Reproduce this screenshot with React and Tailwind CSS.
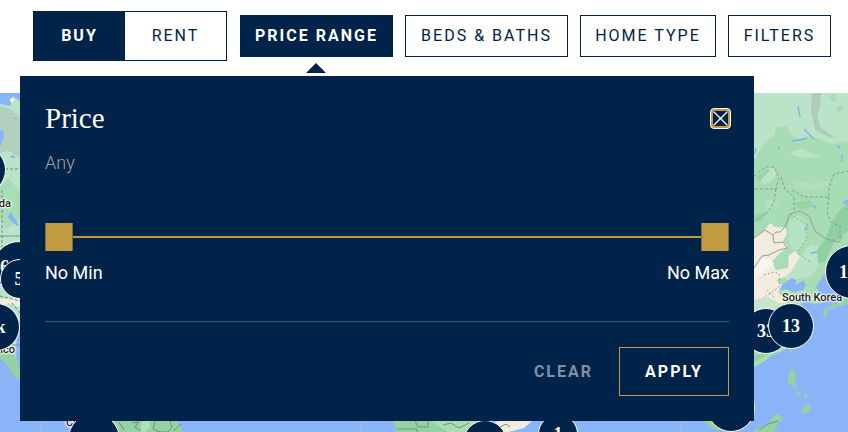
import { useState } from "react";

const sans = "font-['Roboto','Liberation_Sans',sans-serif]";
const serif = "font-['Liberation_Serif','Noto_Serif',serif]";

const filterClass =
  "h-[42px] shrink-0 border border-[#002349] text-base tracking-[2px] whitespace-nowrap";

const thumbClass =
  "col-start-1 row-start-1 h-7 w-full appearance-none bg-transparent pointer-events-none m-0 outline-none [&::-webkit-slider-thumb]:pointer-events-auto [&::-webkit-slider-thumb]:appearance-none [&::-webkit-slider-thumb]:h-7 [&::-webkit-slider-thumb]:w-7 [&::-webkit-slider-thumb]:bg-[#c29b40] [&::-webkit-slider-thumb]:border-x [&::-webkit-slider-thumb]:border-[#7d6c45]";

const pins = [
  { id: "canada", label: "", place: "left-[-42px] top-[53px] size-12" },
  { id: "west", label: "6", place: "left-[-7px] top-[148px] size-13 pr-[29px]" },
  { id: "usa", label: "5k", place: "left-0 top-[166px] size-10 pl-2" },
  { id: "mexico", label: "1k", place: "left-[-28px] top-[210px] size-12" },
  { id: "south", label: "", place: "left-[68px] top-[320px] size-13" },
  { id: "africa", label: "", place: "left-[463px] top-[327px] size-11" },
  { id: "indian", label: "1", place: "left-[538px] top-[321px] size-10" },
  { id: "asia", label: "", place: "left-[707px] top-[291px] size-12" },
  { id: "china", label: "33", place: "left-[743px] top-[215px] size-[46px]" },
  { id: "taiwan", label: "13", place: "left-[768px] top-[210px] size-[46px]" },
  { id: "japan", label: "13", place: "left-[825px] top-[152px] size-[54px] pr-2" },
];

function MapArt() {
  return (
    <svg
      className="absolute inset-0 size-full"
      viewBox="0 93 848 339"
      preserveAspectRatio="xMinYMin slice"
      aria-hidden="true"
    >
      <rect y="93" width="848" height="339" fill="#8ab4f8" />

      {/* North America */}
      <path d="M0 93H30V388L17 378L9 363L0 350Z" fill="#bbe3c8" />
      <path d="M0 93H20V101L13 96L10 106L0 104Z" fill="#8ab4f8" />
      <path d="M0 106L10 109L20 117V158L9 151L0 153Z" fill="#b1d1be" />
      <path d="M0 188L8 177L20 192V220L6 229L0 217Z" fill="#a8dcb5" />
      <path d="M0 131l3-2 1 8-4 10zM7 217l4-5 8 13-2 1zM10 156l3-1 3 3-4 0zM13 119l3-2v2z" fill="#8ab4f8" />
      <path d="M0 299L20 298V307L8 303L0 310Z" fill="#f3ebdd" />
      <path d="M0 349L10 348L20 363V381L12 374L5 362L0 359Z" fill="#94d2a5" />
      <path d="M20 318V370L15 352Z" fill="#8ab4f8" />
      <path d="M0 359L6 363L13 375L20 381V389L0 377Z" fill="#8ab4f8" />
      <path d="M0 236H20M0 345H20" stroke="#7e9788" />
      <path d="M5 169H20M2 190V250M0 296L20 301M12 303L20 313" fill="none" stroke="#71887a" strokeDasharray="3 2" />
      <circle cx="12" cy="100" r="2" fill="#fff" />
      <path d="M41.5 421V432M361.5 421V432M681.5 421V432" stroke="#9cc0fa" />

      {/* South America */}
      <path d="M112 421H178L183 432H116Z" fill="#94d2a5" />
      <path d="M142 421h8v6l-5 5h-5z" fill="#b3dfc0" />
      <path d="M119 422l5 8m8-7l7-1-4 5 6 4m14-10l-2 8 7 3h8l4-5-2-6m3 10l8-7" fill="none" stroke="#718f7c" />

      {/* Africa */}
      <path d="M393 421H485V432H397Z" fill="#94d2a5" />
      <path d="M430 421L448 432H474V421Z" fill="#abdcb7" />
      <path d="M497 421H532L524 428L509 432H490Z" fill="#f3ebdd" />
      <path d="M397 429H417V432M415 421l3 6h10V421M443 425l8-2 8 5 10-5M498 428l8-4 4 3" fill="none" stroke="#77907d" />

      {/* Asia */}
      <path d="M754 93H848V321L812 304L801 306L812 320L800 345L774 354L754 369Z" fill="#a8dcb5" />
      <path d="M754 93H848V141L832 144L820 139L806 136L800 140L790 134L786 126L776 128L774 136L764 143L754 160Z" fill="#bbe3c8" />
      <path d="M812 93H821L820 108L817 115L820 127L836 138L828 137L815 130L811 110Z" fill="#aecdb8" />
      <path d="M829 98l5-5 3 6-4 4zM836 109l6-6 2 6-5 3z" fill="#a8dcb5" />
      <path d="M790 152l12-3 12 6 6-1-2 3-10 1-14-2zM763 172l9-5 5 3-3 9-9 5-5-4z" fill="#bbe3c8" />
      <path d="M794 180l20 4 14-3v6l-18 3-16-3zM764 201l14-3 2 7-14 5z" fill="#b2dfc0" />
      <path d="M756 178l9-9 5 1-11 12zM792 203l18-3 4 6-12 4zM754 216l12-4-5 9-7 2z" fill="#98d4a9" />
      <path d="M754 237L764 231L770 223L775 227L786 228L787 234L783 241L788 247L779 254L772 262L776 270L788 268L789 255L795 251L800 257L796 268L787 276L776 280L784 287L778 292L784 300L790 306L775 308L754 300Z" fill="#f3ebdd" />
      <path d="M754 265L762 258L770 259L774 264L766 270L754 280Z" fill="#faf4ef" />
      <path d="M800 257L811 244L824 247L820 262L812 276L798 279L790 282L784 278L790 273Z" fill="#bbe3c8" />
      <path d="M789 221L799 215L808 225L806 240L799 250L793 250L788 240Z" fill="#b7e1c3" />
      <path d="M838 212L848 203V231L834 243L824 262L818 263L817 250L826 238L830 226Z" fill="#8fd0a1" />
      <path d="M754 300l13-3 12 6 12 0-4 18-20 6-13-4z" fill="#c6e5cb" />
      <path d="M779 290L783 284L792 278L796 280L796 285L804 280L806 285L803 290L793 292L787 289Z" fill="#8ab4f8" />
      <path d="M808 293L815 288L823 276L831 268L848 256V432H754V367L775 356L796 342L806 326L800 308L805 296L811 304Z" fill="#8ab4f8" />
      <path d="M808 290L815 286L818 290L822 303L812 304L808 298Z" fill="#a8dcb5" />
      <path d="M798 106l2 11M804 129l5 5 5 5M792 141l7-1 8-2M842 154v8M779 147v3M756 148l-1 5M805 231l2-7M811 253l6-1M837 146l3 2" fill="none" stroke="#7fb0f5" strokeWidth="1.3" />
      <path d="M842 203l6-4v6zM813 206l4-1-2 4z" fill="#8ab4f8" />
      <path d="M754 176L765 167L774 167L779 177L776 189H754M776 189L774 202L768 212L755 221M781 177L785 189L794 197L794 210M792 190L804 197H829L829 188L834 174L848 171M829 197L827 212L831 222L840 226L840 238" fill="none" stroke="#83a08c" strokeDasharray="3 2" />
      <path d="M754 238L765 230L773 235L776 232H780L785 227L790 214L800 211L809 216L815 231L826 239L839 242L842 236M773 235L774 243L783 242L787 248L779 250L769 255L762 256L754 268" fill="none" stroke="#8fa094" />
      <path d="M790 214L808 225L806 240L798 252L806 260L812 262M764 275l10-3 5 2 1 12-8 6-9 6M767 290l8 8" fill="none" stroke="#9ba79c" strokeDasharray="2 2" />

      {/* Pacific islands */}
      <path d="M823 310l7-3 5-3 6-5 7-2v7l-8 2-7 3-6 1v6l-3 4zM790 351l3-2-2 6zM790 370l5 1 1 9-2 4 4 3-1 2-6-5-4 0zM796 391l3 1 1 4-3-1zM803 393l5 1-2 5zM805 406l4-3 2 7-7 4-3-3zM783 405l4-8-5 10zM754 430l12-5 11-12 7 6-6 3-3 10h-21zM703 421h12l9 10-12-2zM754 356l11-3 12-5-9 7-14 7z" fill="#94d2a5" />
      <path d="M759 430l9-6 10-3" fill="none" stroke="#718f7c" />
    </svg>
  );
}

function MapView() {
  return (
    <main className="relative min-h-[339px] flex-1 overflow-hidden" aria-label="Map of listings">
      <MapArt />
      <div className="text-[11px] leading-4 font-medium text-[#222] [text-shadow:0_0_2px_#fff,0_0_2px_#fff,0_0_2px_#fff,0_0_3px_#fff,0_0_3px_#fff]">
        <span className="absolute right-[calc(100%-11px)] top-[103px]">Canada</span>
        <span className="absolute right-[calc(100%-15px)] top-[249px]">Mexico</span>
        <span className="absolute left-[66px] top-[322px]">Chile</span>
        <span className="absolute left-[782px] top-[197px] whitespace-nowrap">South Korea</span>
      </div>
      {pins.map((p) => (
        <button
          key={p.id}
          type="button"
          aria-label={p.label ? undefined : p.id}
          className={`absolute flex items-center justify-center rounded-full border border-white bg-[#002349] text-lg font-bold text-white ${serif} ${p.place}`}
        >
          {p.label}
        </button>
      ))}
    </main>
  );
}

function PricePanel() {
  const [min, setMin] = useState(0);
  const [max, setMax] = useState(100);
  return (
    <section
      aria-labelledby="price-title"
      className="absolute left-5 top-[76px] z-10 w-[calc(100%-40px)] max-w-[734px] bg-[#002349] px-[25px] pb-[25px] pt-6 text-white"
    >
      <svg className="absolute left-[286px] top-[-13px] h-2.5 w-5" viewBox="0 0 20 10" aria-hidden="true">
        <path d="M0 10L10 0L20 10Z" fill="#002349" />
      </svg>
      <div className="flex h-9 items-center justify-between">
        <h2 id="price-title" className={`text-[29px] leading-9 ${serif}`}>Price</h2>
        <button
          type="button"
          aria-label="Close"
          className="-mr-0.5 size-[21px] rounded-[4px] border border-white bg-[#c29b40] p-0.5"
        >
          <svg className="size-full rounded-[1px] bg-[#002349]" viewBox="0 0 15 15" aria-hidden="true">
            <path d="M0.5 0.5L14.5 14.5M14.5 0.5L0.5 14.5" stroke="#fff" strokeWidth="1.3" />
          </svg>
        </button>
      </div>
      <p className="mt-[15px] text-lg leading-6 font-light text-[#a3a3a3]">Any</p>

      <div className="mt-12 grid items-center">
        <div className="col-start-1 row-start-1 h-0.5 bg-[#c29b40]" />
        <input
          id="price-min"
          type="range"
          value={min}
          onChange={(e) => setMin(Math.min(Number(e.target.value), max))}
          className={thumbClass}
        />
        <input
          id="price-max"
          type="range"
          value={max}
          onChange={(e) => setMax(Math.max(Number(e.target.value), min))}
          className={thumbClass}
        />
      </div>
      <div className="mt-2.5 flex justify-between text-lg leading-6">
        <label htmlFor="price-min">No Min</label>
        <label htmlFor="price-max">No Max</label>
      </div>

      <div className="mt-9 flex items-center justify-end gap-[26px] border-t border-[#40566f] pt-[25px] text-base font-bold tracking-[2px]">
        <button type="button" className="text-[#8091a4]">CLEAR</button>
        <button type="button" className="h-[49px] w-[110px] border border-[#c29b40]">APPLY</button>
      </div>
    </section>
  );
}

export default function App() {
  return (
    <div className={`relative flex min-h-screen flex-col overflow-hidden bg-white ${sans}`}>
      <header className="flex h-[93px] items-start pl-[33px] pt-[11px] text-[#002349]">
        <div className="flex h-[50px] w-[194px] shrink-0 border border-[#002349] text-base tracking-[2px]">
          <button type="button" className="w-[91px] bg-[#002349] font-bold text-white">BUY</button>
          <button type="button" className="flex-1">RENT</button>
        </div>
        <nav className="ml-[13px] mt-1 flex gap-3" aria-label="Search filters">
          <button type="button" aria-expanded="true" className={`${filterClass} w-[153px] bg-[#002349] font-bold text-white`}>PRICE RANGE</button>
          <button type="button" className={`${filterClass} w-[163px]`}>BEDS &amp; BATHS</button>
          <button type="button" className={`${filterClass} w-[136px]`}>HOME TYPE</button>
          <button type="button" className={`${filterClass} w-[103px]`}>FILTERS</button>
        </nav>
      </header>
      <MapView />
      <PricePanel />
    </div>
  );
}
